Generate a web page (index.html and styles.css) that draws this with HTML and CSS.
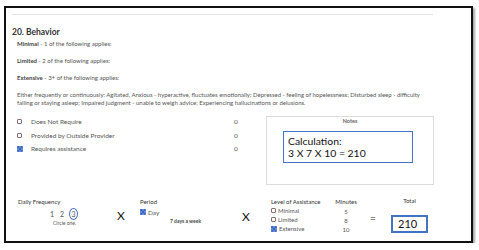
FILE: index.html
```html
<!DOCTYPE html>
<html lang="en">
<head>
  <meta charset="UTF-8" />
  <title>Behavior</title>
  <link rel="stylesheet" href="styles.css">
</head>
<body>
  <div class="sheet">
    <div class="rule"></div>
    <h2>20. Behavior</h2>

    <p class="level-line"><b>Minimal</b> - 1 of the following applies:</p>
    <p class="level-line"><b>Limited</b> - 2 of the following applies:</p>
    <p class="level-line"><b>Extensive</b> - 3+ of the following applies:</p>

    <p class="criteria">Either frequently or continuously: Agitated, Anxious - hyperactive, fluctuates emotionally; Depressed - feeling of hopelessness; Disturbed sleep - difficulty falling or staying asleep; Impaired judgment - unable to weigh advice; Experiencing hallucinations or delusions.</p>

    <div class="middle">
      <div class="options">
        <div class="option">
          <span class="box"></span>
          <span class="opt-label">Does Not Require</span>
          <span class="opt-val">0</span>
        </div>
        <div class="option">
          <span class="box"></span>
          <span class="opt-label">Provided by Outside Provider</span>
          <span class="opt-val">0</span>
        </div>
        <div class="option">
          <svg class="checked" viewBox="0 0 6 6"><rect x="0.5" y="0.5" width="5" height="5" /><path d="M0.7 0.7 L5.3 5.3 M5.3 0.7 L0.7 5.3" /></svg>
          <span class="opt-label">Requires assistance</span>
          <span class="opt-val">0</span>
        </div>
      </div>

      <div class="notes">
        <div class="notes-title">Notes</div>
        <div class="calc">
          Calculation:<br>
          3 X 7 X 10 = 210
        </div>
      </div>
    </div>

    <div class="formula">
      <div class="freq">
        <div class="col-label">Daily Frequency</div>
        <div class="nums"><span>1</span><span>2</span><span class="circled">3</span></div>
        <div class="hint">Circle one.</div>
      </div>

      <div class="op op-x1">X</div>

      <div class="period">
        <div class="col-label">Period</div>
        <div class="pick">
          <svg class="checked" viewBox="0 0 6 6"><rect x="0.5" y="0.5" width="5" height="5" /><path d="M0.7 0.7 L5.3 5.3 M5.3 0.7 L0.7 5.3" /></svg>
          <span>Day</span>
        </div>
        <div class="week">7 days a week</div>
      </div>

      <div class="op op-x2">X</div>

      <div class="assist">
        <div class="col-label">Level of Assistance</div>
        <div class="pick"><span class="box"></span><span>Minimal</span></div>
        <div class="pick"><span class="box"></span><span>Limited</span></div>
        <div class="pick">
          <svg class="checked" viewBox="0 0 6 6"><rect x="0.5" y="0.5" width="5" height="5" /><path d="M0.7 0.7 L5.3 5.3 M5.3 0.7 L0.7 5.3" /></svg>
          <span>Extensive</span>
        </div>
      </div>

      <div class="minutes">
        <div class="col-label">Minutes</div>
        <div class="min-val">5</div>
        <div class="min-val">8</div>
        <div class="min-val">10</div>
      </div>

      <div class="op op-eq">=</div>

      <div class="total">
        <div class="col-label">Total</div>
        <div class="total-box">210</div>
      </div>
    </div>
  </div>
</body>
</html>
```

FILE: styles.css
```css
:root {
  --text: #555;
  --dark: #333;
  --blue: #4472c4;
  --check: #3563c4;
}

body {
  margin: 0;
  background: #fff;
  font-family: Lato, 'Noto Sans', sans-serif;
  color: var(--text);
}

.sheet {
  box-sizing: border-box;
  width: 469px;
  height: 237px;
  margin: 6px 0 0 4px;
  padding: 0 0 0 6px;
  border: 2px solid #111;
  box-shadow: 2px 2px 2px rgba(0, 0, 0, 0.35);
}

.rule {
  width: 421px;
  height: 1px;
  margin-top: 6px;
  background: #e3e3e3;
}

h2 {
  margin: 11px 0 0 0;
  font-size: 8.5px;
  line-height: 12px;
  font-weight: 700;
  color: var(--dark);
}

.level-line {
  margin: 2px 0 9px 5px;
  font-size: 6px;
  line-height: 8px;
}

.level-line b {
  color: #444;
}

.level-line + .level-line {
  margin-top: 0;
}

.criteria {
  margin: 0 0 0 5px;
  width: 416px;
  font-size: 6px;
  line-height: 8px;
}

.middle {
  display: flex;
  margin-top: 8px;
}

.options {
  width: 254px;
  padding-left: 5px;
  box-sizing: border-box;
}

.option {
  display: flex;
  align-items: center;
  height: 13.5px;
  font-size: 6.5px;
}

.box {
  display: inline-block;
  box-sizing: border-box;
  width: 5px;
  height: 5px;
  border: 1px solid #8a6d6d;
  border-radius: 1px;
  flex: none;
}

.checked {
  width: 6px;
  height: 6px;
  flex: none;
}

.checked path {
  stroke: var(--check);
  stroke-width: 1.7;
}

.checked rect {
  fill: #dbe4f6;
  stroke: var(--check);
  stroke-width: 0.7;
}

.opt-label {
  margin-left: 9px;
  width: 203px;
}

.option .checked + .opt-label {
  margin-left: 8px;
}

.notes {
  box-sizing: border-box;
  width: 168px;
  height: 69px;
  margin-top: 1px;
  border: 1px solid #dcdcdc;
  padding-left: 16px;
}

.notes-title {
  margin-left: -16px;
  text-align: center;
  font-size: 5.5px;
  line-height: 9px;
  font-weight: 700;
  color: #666;
}

.calc {
  box-sizing: border-box;
  width: 130px;
  height: 32px;
  margin-top: 5px;
  padding: 3px 0 0 4px;
  border: 1.5px solid var(--blue);
  font-size: 10.4px;
  line-height: 12px;
  color: #111;
}

.formula {
  display: flex;
  margin-top: 13px;
  padding-left: 6px;
  font-size: 6px;
}

.col-label {
  line-height: 8px;
  color: var(--dark);
}

.freq {
  width: 94px;
}

.nums {
  display: flex;
  align-items: center;
  height: 13px;
  margin-top: 1px;
  padding-left: 32px;
  font-size: 7px;
}

.nums span {
  width: 10px;
  text-align: left;
}

.nums .circled {
  box-sizing: border-box;
  width: 9px;
  height: 12px;
  margin-left: -1px;
  border: 1.4px solid var(--blue);
  border-radius: 50%;
  text-align: center;
  line-height: 10px;
}

.hint {
  margin-left: 35px;
  font-size: 5px;
  line-height: 6px;
}

.op {
  padding-top: 12px;
  font-size: 12px;
  line-height: 12px;
  color: #111;
  text-align: center;
}

.op-x1 {
  width: 18px;
}

.period {
  width: 94px;
  margin-left: 10px;
}

.pick {
  display: flex;
  align-items: center;
  gap: 2px;
  height: 9px;
  line-height: 9px;
}

.period .pick {
  margin-top: 1px;
  height: 10px;
  font-size: 6.5px;
}

.week {
  margin-left: 30px;
  font-size: 5px;
  line-height: 9px;
  font-weight: 700;
  color: #444;
}

.op-x2 {
  width: 24px;
  padding-top: 13px;
}

.assist {
  width: 63px;
  margin-left: 13px;
}

.assist .pick:first-of-type {
  margin-top: 1px;
}

.minutes {
  width: 24px;
  text-align: center;
}

.min-val {
  line-height: 9px;
}

.minutes .col-label + .min-val {
  margin-top: 1px;
}

.op-eq {
  width: 30px;
  padding-top: 14px;
  font-size: 10px;
}

.total {
  margin-left: 3px;
  width: 37px;
}

.total .col-label {
  text-align: center;
  margin-top: -1px;
}

.total-box {
  box-sizing: border-box;
  width: 37px;
  height: 18px;
  margin-top: 10px;
  padding-left: 5px;
  border: 2px solid var(--blue);
  font-size: 11px;
  line-height: 14px;
  color: #111;
}
```
